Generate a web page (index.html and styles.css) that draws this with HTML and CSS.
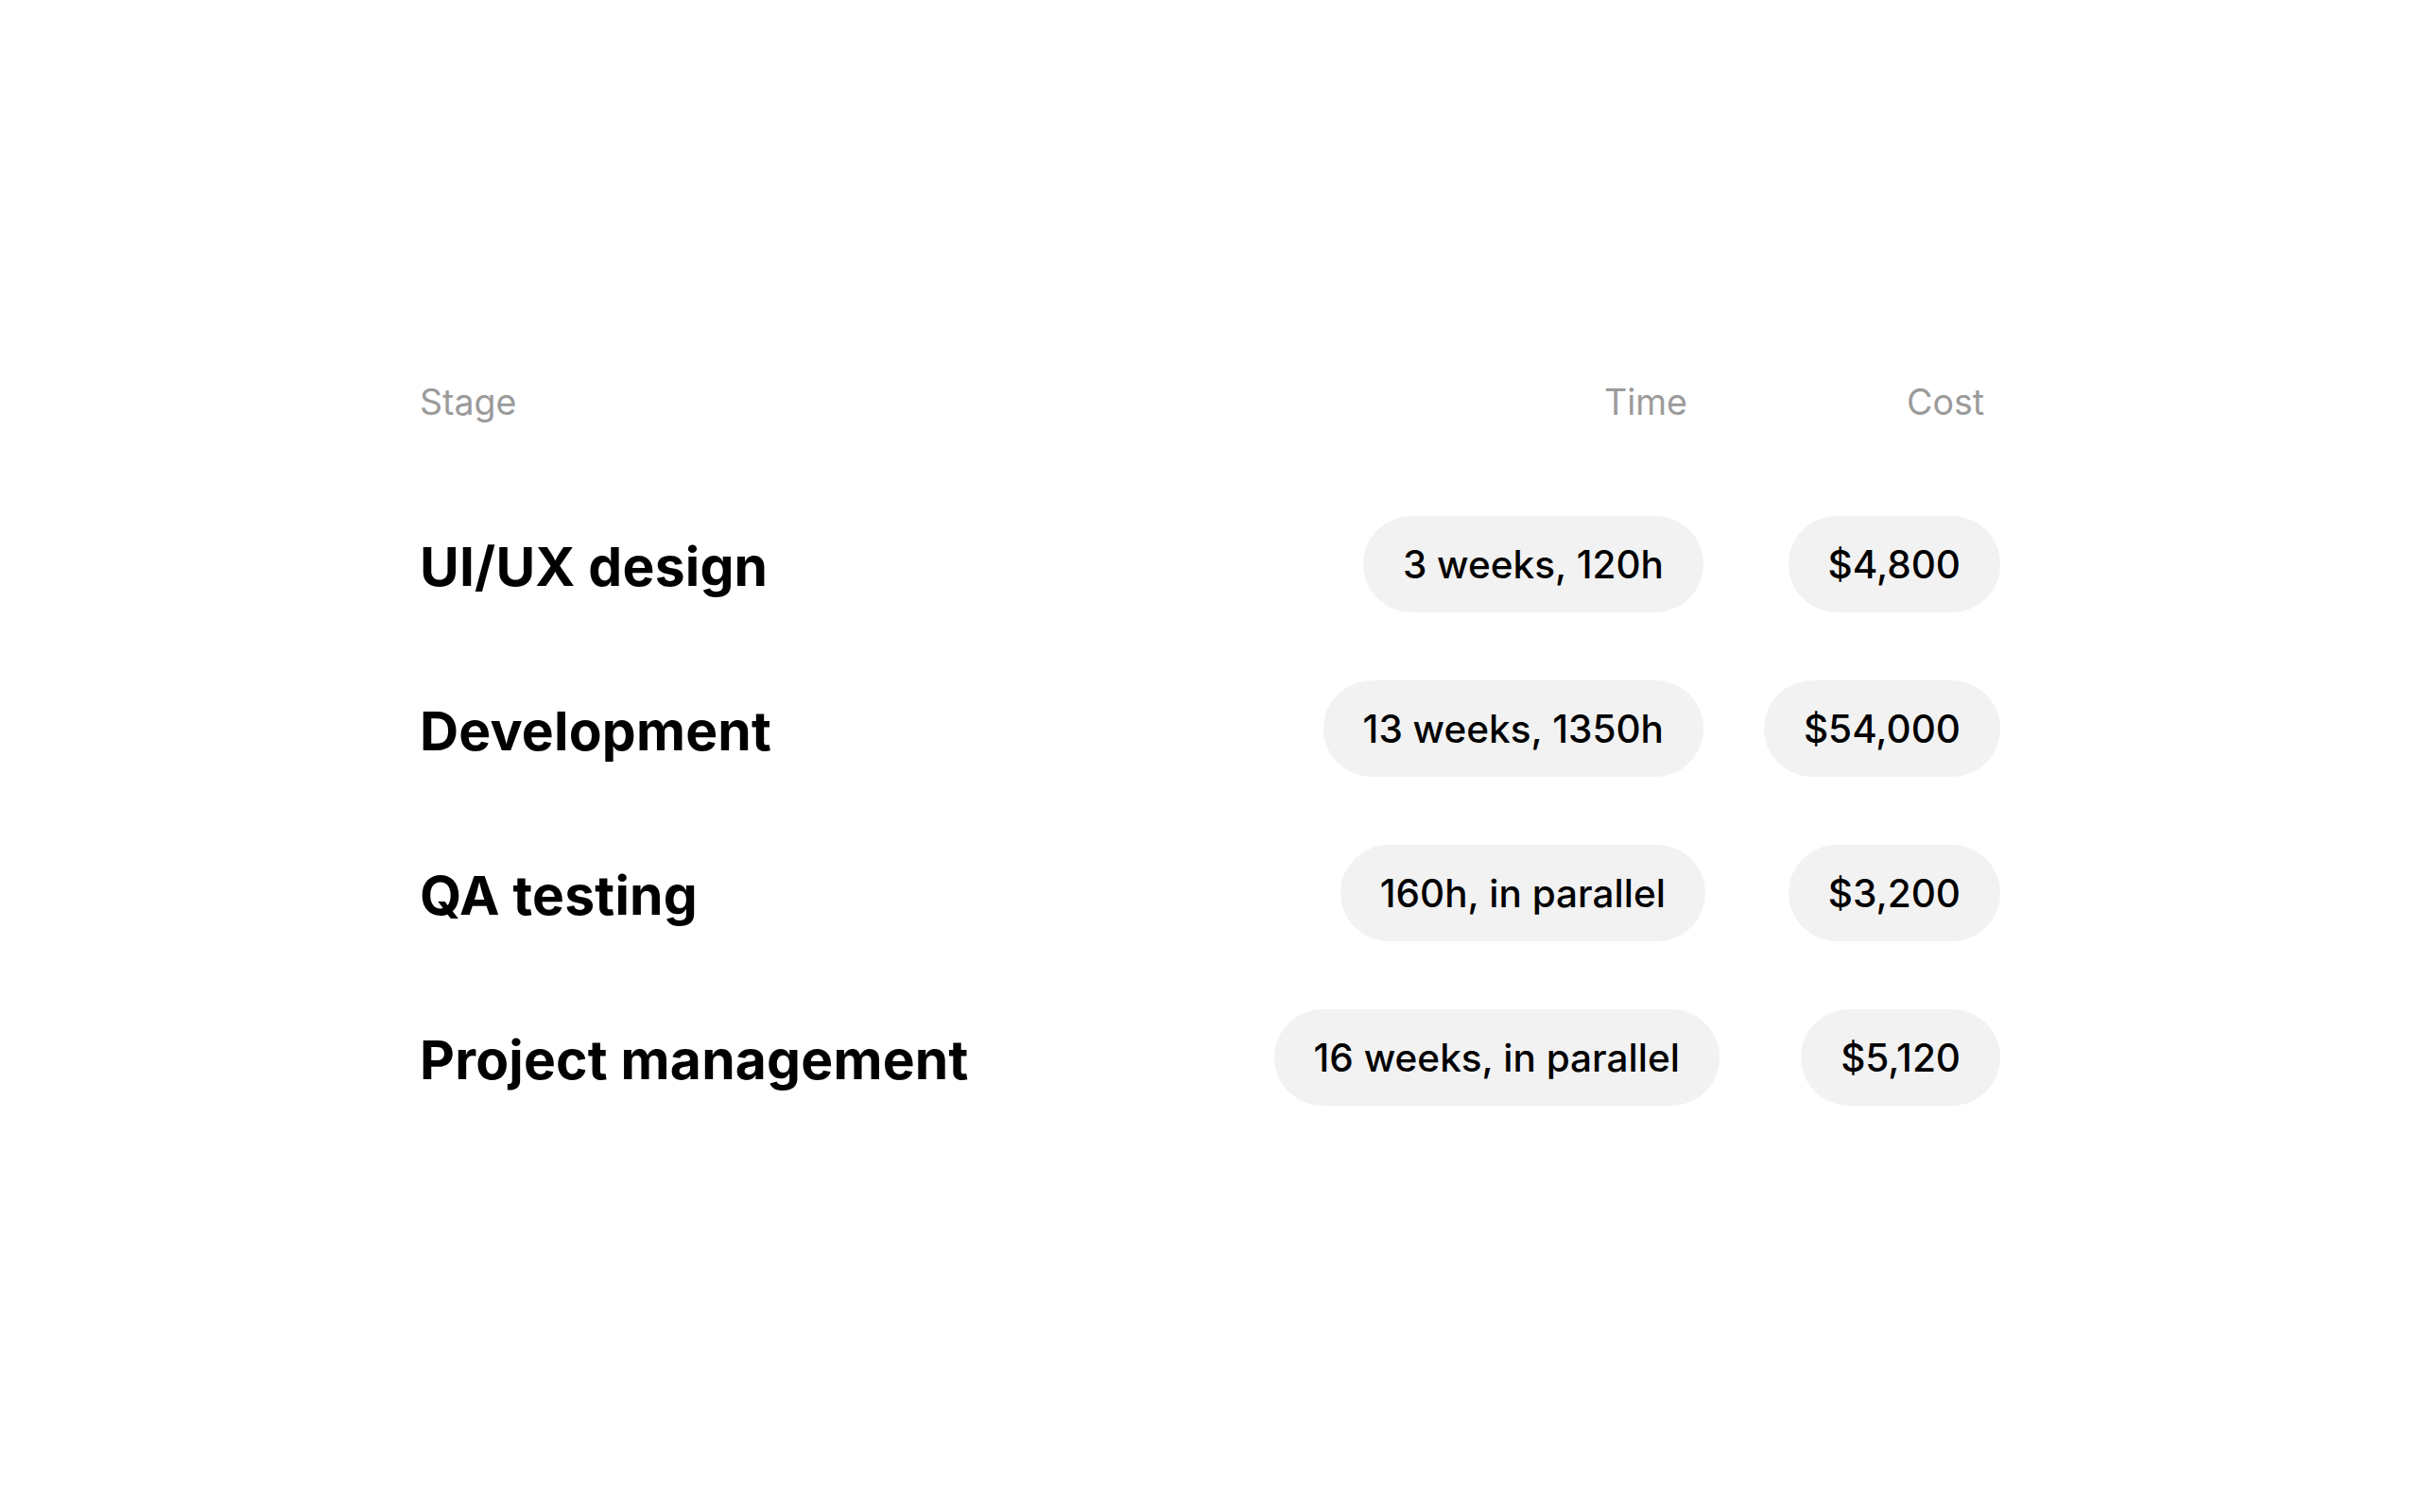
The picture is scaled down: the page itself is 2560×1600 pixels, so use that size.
FILE: index.html
```html
<!DOCTYPE html>
<html lang="en">
<head>
<meta charset="utf-8">
<title>Project estimate</title>
<link rel="stylesheet" href="styles.css">
</head>
<body>
<main class="page">
  <div class="estimate" role="table" aria-label="Project estimate">
    <div class="estimate__head" role="columnheader">Stage</div>
    <div class="estimate__head estimate__head--right" role="columnheader">Time</div>
    <div class="estimate__head estimate__head--right" role="columnheader">Cost</div>

    <div class="estimate__stage" role="cell">UI/UX design</div>
    <div class="pill" role="cell">3 weeks, 120h</div>
    <div class="pill" role="cell">$4,800</div>

    <div class="estimate__stage" role="cell">Development</div>
    <div class="pill" role="cell">13 weeks, 1350h</div>
    <div class="pill" role="cell">$54,000</div>

    <div class="estimate__stage" role="cell">QA testing</div>
    <div class="pill pill--nudge" role="cell">160h, in parallel</div>
    <div class="pill" role="cell">$3,200</div>

    <div class="estimate__stage" role="cell">Project management</div>
    <div class="pill pill--wide" role="cell">16 weeks, in parallel</div>
    <div class="pill" role="cell">$5,120</div>
  </div>
</main>
</body>
</html>
```
FILE: styles.css
```css
html, body {
  margin: 0;
  padding: 0;
  background: #ffffff;
}

body {
  font-family: Inter, "Liberation Sans", sans-serif;
  color: #000000;
}

.page {
  padding-top: 403px;
}

.estimate {
  width: 1672px;
  margin: 0 auto;
  display: grid;
  grid-template-columns: 1fr auto auto;
  column-gap: 64px;
  row-gap: 72px;
  align-items: center;
}

.estimate__head {
  font-size: 37.5px;
  font-weight: 400;
  line-height: 45px;
  color: #9b9b9b;
  margin-bottom: 26px;
}

.estimate__head--right {
  justify-self: end;
  padding-right: 17px;
}

.estimate__stage {
  font-size: 57px;
  font-weight: 700;
  line-height: 1.2;
  letter-spacing: 0.2px;
  padding-top: 6px;
}

.pill {
  justify-self: end;
  display: inline-flex;
  align-items: center;
  height: 102px;
  padding: 0 42px;
  border-radius: 51px;
  background: #f2f2f2;
  font-size: 40.5px;
  font-weight: 500;
  white-space: nowrap;
}

.pill--nudge {
  margin-right: -2px;
}

.pill--wide {
  margin-right: -17px;
}
```
